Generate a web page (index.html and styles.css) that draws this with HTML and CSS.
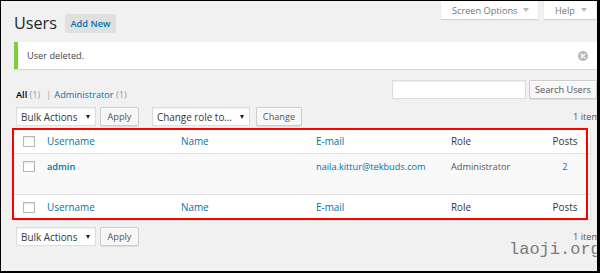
FILE: index.html
```html
<!DOCTYPE html>
<html lang="en">
<head>
<meta charset="utf-8">
<title>Users</title>
<link rel="stylesheet" href="styles.css">
</head>
<body>
<div class="frame">
  <div class="wrap">
    <div class="top">
      <div class="title">
        <h1>Users</h1>
        <a class="add-new">Add New</a>
      </div>
      <div class="screen-meta">
        <div class="tab tab-screen">Screen Options<span class="tri"></span></div>
        <div class="tab tab-help">Help<span class="tri"></span></div>
      </div>
    </div>

    <div class="notice">
      <p class="notice-text">User deleted.</p>
      <span class="dismiss"><svg width="10" height="10" viewBox="0 0 10 10"><circle cx="5" cy="5" r="5" fill="#b4b9be"/><path d="M3.2 3.2L6.8 6.8M6.8 3.2L3.2 6.8" stroke="#fff" stroke-width="1.4" stroke-linecap="round"/></svg></span>
    </div>

    <div class="filters">
      <ul class="subsubsub">
        <li><span class="current">All</span> <span class="count">(1)</span></li>
        <li class="sep">|</li>
        <li><a class="link">Administrator</a> <span class="count">(1)</span></li>
      </ul>
      <div class="search">
        <span class="input"></span>
        <span class="button btn-search">Search Users</span>
      </div>
    </div>

    <div class="tablenav">
      <div class="select sel-bulk">Bulk Actions<span class="caret"></span></div>
      <span class="button btn-apply">Apply</span>
      <div class="select sel-role">Change role to…<span class="caret"></span></div>
      <span class="button btn-change">Change</span>
      <span class="num">1 item</span>
    </div>

    <div class="tbl-wrap">
      <table class="users">
        <colgroup>
          <col class="c-cb"><col class="c-user"><col class="c-name"><col class="c-email"><col class="c-role"><col class="c-posts">
        </colgroup>
        <thead>
          <tr>
            <th class="cb"><span class="check"></span></th>
            <th><a class="link">Username</a></th>
            <th><a class="link">Name</a></th>
            <th><a class="link">E-mail</a></th>
            <th>Role</th>
            <th class="posts">Posts</th>
          </tr>
        </thead>
        <tbody>
          <tr>
            <td class="cb"><span class="check"></span></td>
            <td><a class="link strong">admin</a></td>
            <td></td>
            <td><a class="link">naila.kittur@tekbuds.com</a></td>
            <td>Administrator</td>
            <td class="posts"><a class="link">2</a></td>
          </tr>
        </tbody>
        <tfoot>
          <tr>
            <th class="cb"><span class="check"></span></th>
            <th><a class="link">Username</a></th>
            <th><a class="link">Name</a></th>
            <th><a class="link">E-mail</a></th>
            <th>Role</th>
            <th class="posts">Posts</th>
          </tr>
        </tfoot>
      </table>
      <div class="annotation"></div>
    </div>

    <div class="tablenav tablenav-bottom">
      <div class="select sel-bulk">Bulk Actions<span class="caret"></span></div>
      <span class="button btn-apply">Apply</span>
      <span class="num">1 item</span>
    </div>
  </div>
  <div class="watermark">laoji.org</div>
</div>
</body>
</html>
```

FILE: styles.css
```css
html, body {
  margin: 0;
  padding: 0;
  background: #fff;
}

body {
  font-family: "Open Sans", "Noto Sans", sans-serif;
  color: #444;
  font-size: 9.2px;
}

.frame {
  position: relative;
  width: 600px;
  height: 273px;
  box-sizing: border-box;
  border-style: solid;
  border-color: #000;
  border-width: 1px 3px 2px 1px;
  background: #f1f1f1;
  overflow: hidden;
}

.wrap {
  width: 584px;
  margin-left: 15px;
}

/* header */
.top {
  display: flex;
  justify-content: space-between;
  align-items: flex-start;
  height: 32px;
}

.title {
  display: flex;
  align-items: center;
  margin-top: 13px;
  height: 19px;
}

h1 {
  margin: 0 0 0 -2px;
  font-size: 16.2px;
  font-weight: 400;
  line-height: 19px;
  color: #23282d;
}

.add-new {
  margin-left: 8px;
  height: 19px;
  box-sizing: border-box;
  padding: 0 5.6px;
  display: inline-flex;
  align-items: center;
  background: #e0e0e0;
  border-radius: 2px;
  color: #0073aa;
  font-weight: 600;
  font-size: 9.2px;
}

.screen-meta {
  display: flex;
  gap: 6px;
  margin-right: 4px;
}

.tab {
  height: 18px;
  box-sizing: border-box;
  padding: 0 0 0 11px;
  display: flex;
  align-items: center;
  background: #fff;
  color: #72777c;
  font-size: 9.2px;
  white-space: nowrap;
  box-shadow: 0 1px 1px rgba(0, 0, 0, 0.12);
}

.tab-screen { width: 97px; }
.tab-help { width: 52px; }

.tri {
  display: inline-block;
  margin-left: 6px;
  width: 0;
  height: 0;
  border-left: 3px solid transparent;
  border-right: 3px solid transparent;
  border-top: 4px solid #b4b9be;
}

/* notice */
.notice {
  margin: 9px 0 0 -2px;
  width: 586px;
  height: 27px;
  box-sizing: border-box;
  display: flex;
  align-items: center;
  justify-content: space-between;
  background: #fff;
  border-left: 4px solid #7ad03a;
  box-shadow: 0 1px 1px rgba(0, 0, 0, 0.1);
  padding-left: 9px;
}

.notice-text {
  margin: 0;
  color: #444;
  line-height: 13px;
}

.dismiss {
  display: flex;
  margin-right: 12px;
}

/* filters */
.filters {
  display: flex;
  justify-content: space-between;
  align-items: flex-start;
  margin-top: 11px;
  height: 19px;
}

.subsubsub {
  display: flex;
  gap: 3px;
  list-style: none;
  margin: 0;
  padding: 8px 0 0;
  line-height: 13px;
  color: #666;
}

.current {
  color: #000;
  font-weight: 600;
}

.count {
  color: #999;
}

.sep {
  color: #999;
  margin: 0 0 0 3px;
}

.link {
  color: #0073aa;
  text-decoration: none;
}

.strong {
  font-weight: 600;
}

.search {
  display: flex;
  gap: 3px;
  margin-right: 3px;
}

.input {
  display: block;
  width: 134px;
  height: 19px;
  box-sizing: border-box;
  background: #fff;
  border: 1px solid #ddd;
  box-shadow: inset 0 1px 2px rgba(0, 0, 0, 0.07);
}

/* buttons / selects */
.button {
  height: 19px;
  box-sizing: border-box;
  display: inline-flex;
  align-items: center;
  justify-content: center;
  background: #f7f7f7;
  border: 1px solid #ccc;
  border-radius: 2px;
  box-shadow: inset 0 1px 0 #fff, 0 1px 0 rgba(0, 0, 0, 0.08);
  color: #555;
  font-size: 9.2px;
  white-space: nowrap;
}

.btn-search { width: 68px; }
.btn-apply { width: 39px; margin-left: 4px; }
.btn-change { width: 46px; margin-left: 6px; }

.select {
  height: 19px;
  box-sizing: border-box;
  display: flex;
  align-items: center;
  padding-left: 4px;
  background: #fff;
  border: 1px solid #ddd;
  box-shadow: inset 0 1px 2px rgba(0, 0, 0, 0.07);
  color: #32373c;
  font-size: 9.9px;
  white-space: nowrap;
}

.sel-bulk { width: 80px; }
.sel-role { width: 98px; margin-left: 13px; }

.caret {
  margin-left: auto;
  margin-right: 5px;
  width: 0;
  height: 0;
  border-left: 2.5px solid transparent;
  border-right: 2.5px solid transparent;
  border-top: 4px solid #222;
}

.tablenav {
  display: flex;
  align-items: center;
  margin-top: 8px;
  height: 19px;
}

.num {
  margin-left: auto;
  color: #555;
  font-size: 9.2px;
  white-space: nowrap;
}

.tablenav-bottom {
  margin-top: 7px;
}

/* table */
.tbl-wrap {
  position: relative;
  margin: 2px 0 0 -3px;
}

.users {
  table-layout: fixed;
  border-collapse: separate;
  border-spacing: 0;
  width: 578px;
  background: #fff;
  border: 1px solid #e5e5e5;
  box-shadow: 0 1px 1px rgba(0, 0, 0, 0.04);
}

.c-cb { width: 26px; }
.c-user { width: 134px; }
.c-name { width: 135px; }
.c-email { width: 135px; }
.c-role { width: 96px; }
.c-posts { width: 50px; }

.users th,
.users td {
  text-align: left;
  font-weight: 400;
  line-height: 13px;
  padding: 6px 7px 5px;
  white-space: nowrap;
  overflow: hidden;
}

.users th {
  font-size: 9.9px;
  color: #32373c;
}

.users thead th {
  border-bottom: 1px solid #e1e1e1;
}

.users tfoot th {
  border-top: 1px solid #e1e1e1;
}

.users td {
  font-size: 9.2px;
  color: #555;
  vertical-align: top;
  padding-bottom: 21px;
  background: #f9f9f9;
}

.users .cb {
  padding-left: 9px;
  padding-right: 0;
}

.users .posts {
  text-align: center;
}

.check {
  display: block;
  width: 12px;
  height: 11px;
  box-sizing: border-box;
  background: #fff;
  border: 1px solid #b4b9be;
  box-shadow: inset 0 1px 2px rgba(0, 0, 0, 0.1);
}

.users td .check {
  margin-top: 1px;
}

.annotation {
  position: absolute;
  left: -1px;
  top: 0;
  width: 576px;
  height: 92px;
  box-sizing: border-box;
  border: 2px solid #ff0000;
  pointer-events: none;
}

.watermark {
  position: absolute;
  left: 508px;
  top: 240px;
  font-family: "Liberation Mono", monospace;
  font-size: 17px;
  line-height: 17px;
  color: #7a7a7a;
  white-space: nowrap;
}
```
